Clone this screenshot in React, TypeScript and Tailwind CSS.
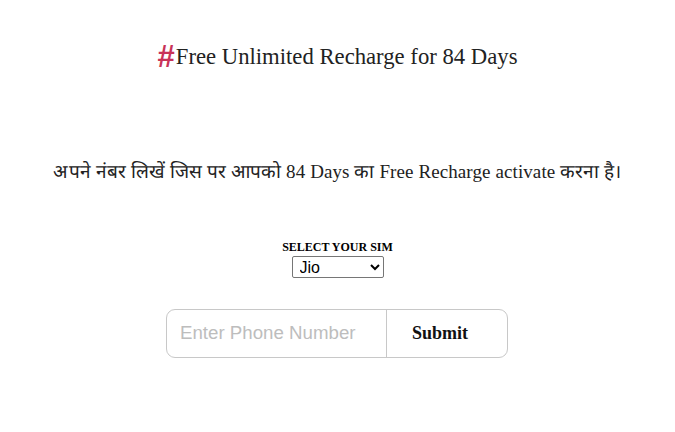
import { useState } from 'react';

export default function App() {
  const [sim, setSim] = useState('Jio');
  const [phone, setPhone] = useState('');

  return (
    <div className="min-h-[432px] w-full bg-white text-[#222] font-['Liberation_Serif',serif]">
      {/* Heading */}
      <div className="flex justify-center pt-[42px]">
        <h1 className="flex items-center text-[22.7px] leading-[30px] text-[#222]">
          <span className="font-['Liberation_Sans',sans-serif] font-bold text-[31px] leading-[30px] text-[#c93358] mr-[1px]">#</span>
          Free Unlimited Recharge for 84 Days
        </h1>
      </div>

      {/* Hindi line */}
      <p className="mt-[86px] text-center text-[19px] leading-[28px] text-[#222] tracking-[0.1px]">
        अपने नंबर लिखें जिस पर आपको 84 Days का Free Recharge activate करना है।
      </p>

      {/* SIM select */}
      <div className="mt-[54px] flex flex-col items-center">
        <label className="text-[12px] leading-[14px] font-bold uppercase text-black">Select Your Sim</label>
        <select
          value={sim}
          onChange={(e) => setSim(e.target.value)}
          className="mt-[2px] w-[92px] h-[22px] border border-[#767676] rounded-[2px] bg-white text-[16px] leading-[18px] pl-[3px] font-['Liberation_Sans',sans-serif] text-black"
        >
          <option>Jio</option>
          <option>Airtel</option>
          <option>Vi</option>
        </select>
      </div>

      {/* Phone + submit */}
      <div className="mt-[31px] flex justify-center">
        <div className="flex w-[342px] h-[49px] mr-[1px] border border-[#c8c8c8] rounded-[9px] overflow-hidden">
          <input
            value={phone}
            onChange={(e) => setPhone(e.target.value)}
            placeholder="Enter Phone Number"
            className="w-[220px] px-[13px] text-[18.7px] font-['Liberation_Sans',sans-serif] outline-none placeholder:text-[#bdbdbd] border-r border-[#c8c8c8]"
          />
          <button className="flex-1 pr-[14px] text-[18px] font-bold text-[#111]">Submit</button>
        </div>
      </div>
    </div>
  );
}
